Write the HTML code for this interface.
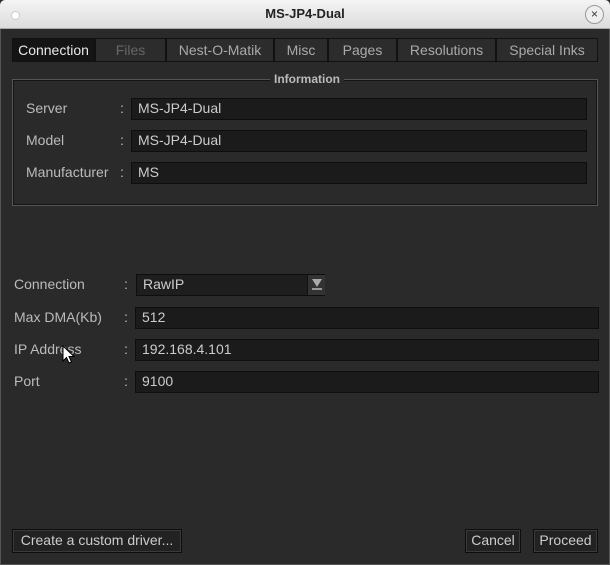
<!DOCTYPE html>
<html><head><style>
body{margin:0;width:610px;height:565px;overflow:hidden;font-family:"Liberation Sans",sans-serif;font-size:14px;background:#2b2b2b}
.a{position:absolute}
#title{left:0;top:0;width:610px;height:28px;background:linear-gradient(#f4f4f4,#dcdcdc);border-bottom:1px solid #aaa;text-align:center;line-height:27px;font-weight:bold;font-size:13px;color:#222;border-radius:5px 5px 0 0}
#win{left:0;top:29px;width:608px;height:535px;background:#2a2a2a;border:1px solid #555;border-top:none}
.tab{top:38px;height:24px;line-height:22px;text-align:center;background:#2c2c2c;border:1px solid #111;box-sizing:border-box;color:#aaa}
.f{background:#1b1b1b;border:1px solid #0e0e0e;box-sizing:border-box;color:#ccc;padding-left:6px;height:22px;line-height:19px}
.l{color:#bbb}
.b{background:#222;border:1px solid #0d0d0d;box-shadow:inset 0 0 0 1px #3a3a3a;box-sizing:border-box;color:#ccc;text-align:center;line-height:21px;height:24px}
</style></head><body>
<div class="a" id="title">MS-JP4-Dual</div>
<div class="a" style="left:11px;top:11px;width:7px;height:7px;border-radius:50%;background:#fff;border:1px solid #ccc"></div>
<div class="a" style="left:585px;top:5px;width:17px;height:17px;border-radius:50%;border:1px solid #999;background:#eee;text-align:center;line-height:16px;font-size:12px;color:#333">×</div>
<div class="a" id="win"></div>
<div class="a tab" style="left:12px;width:83px;background:#141414;color:#e8e8e8">Connection</div>
<div class="a tab" style="left:95px;width:71px;color:#666">Files</div>
<div class="a tab" style="left:166px;width:108px">Nest-O-Matik</div>
<div class="a tab" style="left:274px;width:54px">Misc</div>
<div class="a tab" style="left:328px;width:69px">Pages</div>
<div class="a tab" style="left:397px;width:99px">Resolutions</div>
<div class="a tab" style="left:496px;width:102px">Special Inks</div>
<div class="a" style="left:12px;top:79px;width:586px;height:127px;border:1px solid #555;box-shadow:inset 0 0 0 1px #151515;box-sizing:border-box"></div>
<div class="a" style="left:270px;top:72px;padding:0 4px;background:#2a2a2a;color:#bbb;font-size:12px;font-weight:bold;line-height:15px">Information</div>
<div class="a l" style="left:26px;top:100px">Server</div><div class="a l" style="left:120px;top:100px">:</div>
<div class="a f" style="left:131px;top:98px;width:456px">MS-JP4-Dual</div>
<div class="a l" style="left:26px;top:132px">Model</div><div class="a l" style="left:120px;top:132px">:</div>
<div class="a f" style="left:131px;top:130px;width:456px">MS-JP4-Dual</div>
<div class="a l" style="left:26px;top:164px">Manufacturer</div><div class="a l" style="left:120px;top:164px">:</div>
<div class="a f" style="left:131px;top:162px;width:456px">MS</div>
<div class="a l" style="left:14px;top:276px">Connection</div><div class="a l" style="left:124px;top:276px">:</div>
<div class="a f" style="left:136px;top:274px;width:189px;background:#1e1e1e">RawIP</div>
<div class="a" style="left:307px;top:275px;width:17px;height:20px;background:#333;border-left:1px solid #111"><div style="margin:4px 0 0 4px;width:0;height:0;border-left:5px solid transparent;border-right:5px solid transparent;border-top:8px solid #aaa"></div><div style="margin:1px 0 0 4px;width:10px;height:2px;background:#999"></div></div>
<div class="a l" style="left:14px;top:309px">Max DMA(Kb)</div><div class="a l" style="left:124px;top:309px">:</div>
<div class="a f" style="left:135px;top:307px;width:464px">512</div>
<div class="a l" style="left:14px;top:341px">IP Address</div><div class="a l" style="left:124px;top:341px">:</div>
<div class="a f" style="left:135px;top:339px;width:464px">192.168.4.101</div>
<div class="a l" style="left:14px;top:373px">Port</div><div class="a l" style="left:124px;top:373px">:</div>
<div class="a f" style="left:135px;top:371px;width:464px">9100</div>
<svg class="a" style="left:62px;top:345px" width="14" height="22"><path d="M1 1 L1 16 L4.5 12.5 L7 18 L9.5 17 L7 11.5 L12 11.5 Z" fill="#fff" stroke="#000"/></svg>
<div class="a b" style="left:12px;top:529px;width:170px">Create a custom driver...</div>
<div class="a b" style="left:465px;top:529px;width:56px">Cancel</div>
<div class="a b" style="left:533px;top:529px;width:65px">Proceed</div>
</body></html>
